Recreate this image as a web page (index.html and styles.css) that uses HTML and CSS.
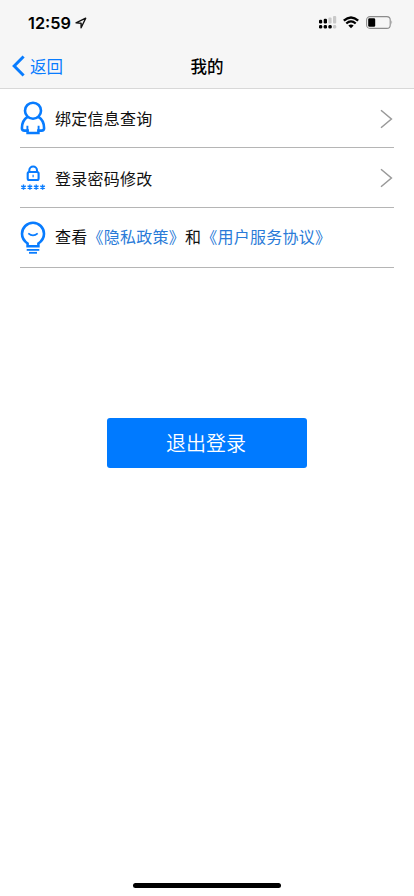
FILE: index.html
```html
<!DOCTYPE html>
<html lang="zh-CN">
<head>
<meta charset="utf-8">
<meta name="viewport" content="width=device-width, initial-scale=1">
<title>我的</title>
<link rel="stylesheet" href="styles.css">
</head>
<body>
<div class="screen">
  <header class="header">
    <div class="status">
      <span class="time">12:59</span>
      <svg class="location" width="12" height="12" viewBox="0 0 12 12"><path d="M1 5.9 10.7 1.2 6.1 10.8V6.2Z" fill="none" stroke="#111" stroke-width="1.4" stroke-linejoin="round"/></svg>
      <svg class="signal" width="18" height="13" viewBox="0 0 18 13">
        <g fill="#000"><rect x="0" y="3.7" width="3.2" height="3.8" rx="1.2"/><rect x="4.7" y="2.7" width="3.3" height="4.8" rx="1.2"/><rect x="0" y="9" width="3.2" height="3.6" rx="1.3"/><rect x="4.7" y="9" width="3.3" height="3.6" rx="1.3"/><rect x="9.4" y="9" width="3.3" height="3.6" rx="1.3"/></g>
        <g fill="#c9c9c9"><rect x="9.4" y="1.6" width="3.2" height="6" rx="1"/><rect x="14" y="0" width="3.2" height="7.6" rx="1"/><rect x="14" y="9" width="3.2" height="3.6" rx="1.3"/></g>
      </svg>
      <svg class="wifi" width="16" height="13" viewBox="0 0 16 13"><g fill="none" stroke="#000" stroke-width="2.3"><path d="M.8 4.7Q8-1.8 15.2 4.7"/><path d="M3.3 7.5Q8 3.3 12.7 7.5"/></g><path d="M5.3 9.5Q8 7.5 10.7 9.5L8 12.3Z"/></svg>
      <svg class="battery" width="28" height="13" viewBox="0 0 28 13"><rect x=".6" y=".6" width="23.6" height="11.8" rx="3.4" fill="none" stroke="#8c8c8c" stroke-width="1.1"/><rect x="2.2" y="2.3" width="7" height="8.4" rx="1.3"/><path d="M25.5 4.3Q27.3 6.5 25.5 8.7Z" fill="#8c8c8c"/></svg>
    </div>
    <nav class="nav">
      <a class="back"><svg width="13" height="22" viewBox="0 0 13 22"><path d="M11.6 1.5 2.2 11l9.4 9.5" fill="none" stroke="#087cff" stroke-width="3"/></svg><span>返回</span></a>
      <h1 class="title">我的</h1>
    </nav>
  </header>
  <main class="content">
    <ul class="list">
      <li class="row">
        <svg class="icon" width="26" height="36" viewBox="0 0 26 36"><g fill="none" stroke="#087cff" stroke-width="2.6"><circle cx="13" cy="10.7" r="8"/><path d="M7.6 16.9C3.7 19.3 1.9 23.3 1.9 28.2Q1.9 30.6 4.5 30.6H7.6V33H18.4V30.6H21.5Q24.1 30.6 24.1 28.2C24.1 23.3 22.3 19.3 18.4 16.9"/><path d="M7.4 25.8V31M18.6 25.8V31" stroke-width="1.9"/></g></svg>
        <span class="label">绑定信息查询</span>
        <svg class="chevron" width="13" height="20" viewBox="0 0 13 20"><path d="M1 1.2 11.4 10 1 18.8" fill="none" stroke="#999" stroke-width="1.5"/></svg>
      </li>
      <li class="row">
        <svg class="icon" width="26" height="36" viewBox="0 0 26 36"><g fill="none" stroke="#087cff"><rect x="7.7" y="12" width="10.9" height="8" rx="1.5" stroke-width="2.1"/><path d="M9.3 12v-1.6a3.85 3.85 0 0 1 7.7 0V12" stroke-width="2.1"/><path d="M13.1 14.8v2.4" stroke-width="1.2"/><path id="star" d="M3.5 24.6v5.2M1.2 25.9 5.8 28.5M1.2 28.5 5.8 25.9" stroke-width="1.4"/><use href="#star" x="6.4"/><use href="#star" x="12.7"/><use href="#star" x="19.1"/></g></svg>
        <span class="label">登录密码修改</span>
        <svg class="chevron" width="13" height="20" viewBox="0 0 13 20"><path d="M1 1.2 11.4 10 1 18.8" fill="none" stroke="#999" stroke-width="1.5"/></svg>
      </li>
      <li class="row">
        <svg class="icon" width="26" height="36" viewBox="0 0 26 36"><g fill="none" stroke="#087cff" stroke-width="2.6"><path d="M7.6 26.2V23.5C4 21 2 17.5 2 13.8a11 11 0 0 1 22 0C24 17.5 22 21 18.4 23.5V26.2Z"/><path d="M6.7 29.9H19.3" stroke-width="1.8"/><path d="M9 32.8H17" stroke-width="1.8"/><path d="M8.3 13.3Q13 17.4 17.7 13.3" stroke-width="1.7"/></g></svg>
        <span class="label agreement">查看<a>《隐私政策》</a>和<a>《用户服务协议》</a></span>
      </li>
    </ul>
    <button class="logout" type="button">退出登录</button>
  </main>
  <div class="home-indicator"></div>
</div>
</body>
</html>
```
FILE: styles.css
```css
* { box-sizing: border-box; }
body {
  margin: 0;
  background: #fff;
  color: #111;
  font-family: Inter, "Noto Sans CJK SC", sans-serif;
}
.screen {
  display: flex;
  flex-direction: column;
  height: 896px;
  overflow: hidden;
}
.header {
  height: 89px;
  flex: none;
  background: #f6f6f6;
  border-bottom: 1px solid #d8d8d8;
}
.status {
  display: flex;
  align-items: center;
  height: 44px;
  padding: 1px 20px 0 28px;
}
.time {
  width: 44px;
  font-size: 16.3px;
  font-weight: 600;
  line-height: 20px;
  color: #000;
  white-space: nowrap;
}
.location { margin-left: 3px; }
.signal { margin-left: auto; }
.wifi { margin-left: 6px; }
.battery { margin-left: 7px; }
.nav {
  display: grid;
  grid-template-columns: 1fr auto 1fr;
  align-items: center;
  height: 44px;
}
.back {
  display: flex;
  align-items: center;
  gap: 5px;
  padding-left: 12px;
  color: #087cff;
  font-size: 16.5px;
  line-height: 24px;
}
.back span { padding-top: 2px; }
.title {
  margin: 0;
  padding-top: 2px;
  color: #000;
  font-size: 16.5px;
  font-weight: 500;
  line-height: 24px;
}
.content { flex: 1; }
.list {
  margin: 0;
  padding: 0 20px;
  list-style: none;
}
.row {
  display: flex;
  align-items: center;
  height: 60px;
  border-bottom: 1px solid #b5b5b5;
}
.row:first-child { height: 59px; }
.icon { flex: none; }
.label {
  margin-left: 9px;
  padding-top: 2px;
  font-size: 16px;
  line-height: 24px;
  letter-spacing: 0.25px;
  white-space: nowrap;
}
.agreement { padding: 0 0 2px; }
.agreement a { color: #2a7bd8; }
.chevron {
  margin-left: auto;
  margin-right: 1px;
  margin-top: 1px;
}
.logout {
  display: block;
  width: 200px;
  height: 50px;
  margin: 150px auto 0;
  padding: 2px 2px 0 0;
  border: 0;
  border-radius: 3px;
  background: #007aff;
  color: #fff;
  font-family: inherit;
  font-size: 20px;
  font-weight: 350;
  line-height: 48px;
}
.home-indicator {
  flex: none;
  width: 148px;
  height: 5px;
  margin: 0 auto 8px;
  border-radius: 3px;
  background: #000;
}
```
